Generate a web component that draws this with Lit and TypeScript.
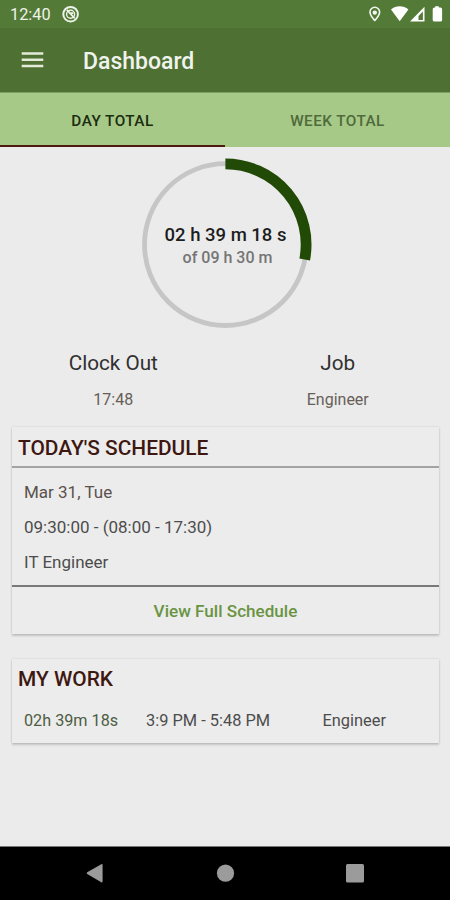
import { LitElement, html, css } from "lit";
import { customElement, state } from "lit/decorators.js";

@customElement("status-bar")
class StatusBar extends LitElement {
  static styles = css`
    :host { display: flex; align-items: center; height: 28px; background: #537a37; color: #eef3ea; box-sizing: border-box; padding: 0 7px 0 10px; }
    .time { font-size: 16.3px; line-height: 28px; padding-top: 2px; width: 41px; }
    .left { margin-left: 11px; width: 18px; height: 18px; }
    .icons { margin-left: auto; width: 76px; height: 28px; }
    svg { display: block; }
  `;
  render() {
    return html`
      <span class="time">12:40</span>
      <svg class="left" viewBox="0 0 18 18" fill="none" stroke="#eef3ea">
        <circle cx="8.600" cy="9.200" r="7.300" stroke-width="2" />
        <circle cx="8.600" cy="9.200" r="4" stroke-width="1.400" />
        <path d="M4.800 4.800 12.800 13.400M8.600 8.200h2.800" stroke-width="1.700" />
      </svg>
      <svg class="icons" viewBox="367 0 76 28">
        <path fill="#f4f7f1" fill-rule="evenodd" d="M374.8 6.6a5.6 5.6 0 0 0-5.6 5.7c0 3.9 5.6 9.3 5.6 9.3s5.6-5.4 5.6-9.3a5.6 5.6 0 0 0-5.6-5.7ZM374.8 8.1a4 4 0 0 1 4 4.2c0 2.3-2.5 5.4-4 7-1.5-1.6-4-4.7-4-7a4 4 0 0 1 4-4.2Z" />
        <circle cx="374.8" cy="12.600" r="2.200" fill="#f4f7f1" />
        <path fill="#fff" d="M391 9.4c5-4.2 12.400-4.200 17.400 0L399.700 21.300Z" />
        <path fill="#fff" fill-rule="evenodd" d="M424.500 6.700V21.600H410ZM422.900 11.500l-4.400 4.400v4.100h4.400Z" />
        <path fill="#fff" d="M434.400 7.600h.8v-1.400h3.600v1.400h1.600q1.700 0 1.700 1.700v10.600q0 1.700-1.700 1.700h-6q-1.700 0-1.700-1.700v-10.600q0-1.700 1.700-1.700Z" />
      </svg>
    `;
  }
}

@customElement("progress-ring")
class ProgressRing extends LitElement {
  static styles = css`
    :host { display: grid; width: 172px; height: 172px; place-items: center; }
    svg, .label { grid-area: 1 / 1; }
    .label { text-align: center; white-space: nowrap; }
    .done { font-size: 18.5px; line-height: 24px; font-weight: 500; color: #1d1d1d; margin-top: 3px; }
    .total { font-size: 16px; line-height: 22px; font-weight: 500; color: #757575; padding-left: 4px; }
  `;
  render() {
    const a = ((2 * 3600 + 39 * 60 + 18) / (9.5 * 3600)) * 2 * Math.PI;
    const r = 80.7;
    const cx = 86.4;
    const cy = 86.6;
    const x = cx + r * Math.sin(a);
    const y = cy - r * Math.cos(a);
    return html`
      <svg width="173" height="173" viewBox="0 0 173 173" fill="none">
        <circle cx=${cx} cy=${cy} r="80.900" stroke="#c6c6c6" stroke-width="4.800" />
        <path d="M${cx} ${cy - r}A${r} ${r} 0 0 1 ${x} ${y}" stroke="#214a07" stroke-width="10.800" />
      </svg>
      <div class="label">
        <div class="done">02 h 39 m 18 s</div>
        <div class="total">of 09 h 30 m</div>
      </div>
    `;
  }
}

@customElement("app-root")
class AppRoot extends LitElement {
  @state() private tab = 0;

  static styles = css`
    :host { display: flex; flex-direction: column; height: 900px; width: 450px; overflow: hidden; background: #ebebeb; font-family: Roboto, "Liberation Sans", sans-serif; color: #4c4c4c; }
    .bar { display: flex; align-items: center; height: 64px; background: #4e7033; flex: none; box-sizing: border-box; padding-left: 21px; }
    .title { margin: 0 0 0 39px; padding-top: 3px; box-sizing: border-box; font-size: 23px; line-height: 28px; font-weight: 500; color: #f0f3ed; }
    .menu { display: block; }
    .tabs { display: grid; grid-template-columns: 1fr 1fr; height: 55px; flex: none; background: #a7c987; box-shadow: inset 0 1px #7f9f63; }
    .tab { border: 0; background: none; padding: 5px 0 0; margin: 0; font: 500 15.300px/48px Roboto, sans-serif; letter-spacing: .45px; color: #4f6a3c; border-bottom: 2px solid transparent; }
    .tab.on { color: #1b2c11; border-color: #4c1a10; }
    .ring { display: flex; justify-content: center; padding: 11px 0 0 0; height: 172px; flex: none; }
    .stats { display: grid; grid-template-columns: 1fr 1fr; text-align: center; margin-top: 19px; padding-left: 1px; flex: none; }
    .stat { height: 78px; }
    .name { font-size: 20.700px; line-height: 28px; color: #303030; }
    .value { font-size: 16px; line-height: 24px; margin-top: 11px; color: #675e58; }
    .card { margin: 0 11px 0 12px; background: #ececec; box-shadow: 0 2px 2px rgba(0,0,0,.16), 0 0 2px rgba(0,0,0,.12); flex: none; }
    .head { margin: 0; font-size: 20.900px; font-weight: 500; line-height: 42px; height: 39px; padding-left: 6px; color: #3f1711; }
    .rows { border-top: 2px solid #a3a3a3; border-bottom: 2px solid #777a77; padding: 7px 12px 5px; }
    .row { font-size: 17px; line-height: 35px; }
    .date { color: #5b524d; }
    .link { display: block; text-align: center; font-size: 17.100px; font-weight: 500; line-height: 48px; color: #699442; text-decoration: none; height: 47px; }
    .work { margin-top: 25px; height: 84px; }
    .work .head { line-height: 40px; }
    .shift { display: grid; grid-template-columns: 122px 176.500px 1fr; padding-left: 12px; font-size: 16.400px; line-height: 46px; }
    .green { color: #4d5d43; font-size: 16.200px; }
    .nav { margin-top: auto; height: 53px; border-top: 1px solid #777; background: #000; flex: none; }
    .nav svg { display: block; }
  `;

  render() {
    return html`
      <status-bar></status-bar>
      <header class="bar">
        <svg class="menu" width="23" height="20" viewBox="0 0 23 20"><path d="M.7 4h21.600M.7 10.300h21.600M.7 16.500h21.600" stroke="#e3ead8" stroke-width="2.500" transform="translate(0 -.6)" /></svg>
        <h1 class="title">Dashboard</h1>
      </header>
      <nav class="tabs">
        ${["DAY TOTAL", "WEEK TOTAL"].map(
          (t, i) => html`<button class="tab ${i === this.tab ? "on" : ""}" @click=${() => (this.tab = i)}>${t}</button>`
        )}
      </nav>
      <div class="ring"><progress-ring></progress-ring></div>
      <section class="stats">
        <div class="stat"><div class="name">Clock Out</div><div class="value">17:48</div></div>
        <div class="stat"><div class="name">Job</div><div class="value">Engineer</div></div>
      </section>
      <section class="card">
        <h2 class="head">TODAY'S SCHEDULE</h2>
        <div class="rows">
          <div class="row date">Mar 31, Tue</div>
          <div class="row">09:30:00 - (08:00 - 17:30)</div>
          <div class="row">IT Engineer</div>
        </div>
        <a class="link">View Full Schedule</a>
      </section>
      <section class="card work">
        <h2 class="head">MY WORK</h2>
        <div class="shift"><span class="green">02h 39m 18s</span><span>3:9 PM - 5:48 PM</span><span>Engineer</span></div>
      </section>
      <footer class="nav">
        <svg width="450" height="53" viewBox="0 847 450 53" fill="#9b9b9b">
          <path d="M87.200 872.200 101.300 864.200Q102.600 863.500 102.600 865V881Q102.600 883 101.300 882.200L87.200 874Q86 873.200 87.200 872.200Z" />
          <circle cx="225.500" cy="873.200" r="8.600" />
          <rect x="346" y="864" width="18" height="18.500" rx="1.500" />
        </svg>
      </footer>
    `;
  }
}
